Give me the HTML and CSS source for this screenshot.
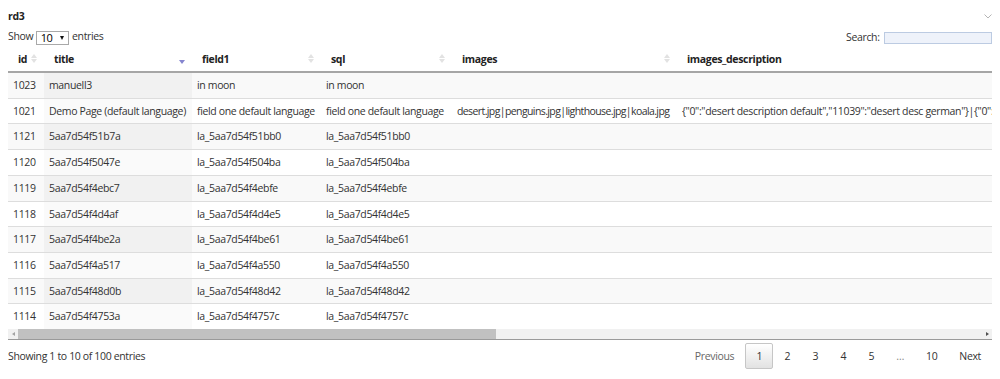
FILE: index.html
```html
<!DOCTYPE html>
<html lang="en">
<head>
    <meta charset="UTF-8" />
    <title>rd3</title>
    <link rel="stylesheet" href="styles.css">
</head>
<body>
<div class="panel">
    <!-- Panel header -->
    <div class="panel-head">
        <span class="panel-title">rd3</span>
        <svg class="chevron" viewBox="0 0 8 5" width="8" height="5"><path d="M0.5 0.5 L4 4 L7.5 0.5" fill="none" stroke="#b5b5b5" stroke-width="1"/></svg>
    </div>

    <!-- Length + search controls -->
    <div class="dt-top">
        <label class="dt-length">Show <span class="len-select">10 <i class="caret"></i></span> entries</label>
        <label class="dt-search">Search: <input type="search"></label>
    </div>

    <!-- Scrolling table -->
    <div class="dt-scroll">
        <table>
            <colgroup>
                <col class="c-id"><col class="c-title"><col class="c-field"><col class="c-sql"><col class="c-img"><col class="c-desc">
            </colgroup>
            <thead>
            <tr>
                <th><div class="th-in">id<i class="sort"></i></div></th>
                <th><div class="th-in">title<i class="sort desc"></i></div></th>
                <th><div class="th-in">field1<i class="sort"></i></div></th>
                <th><div class="th-in">sql<i class="sort"></i></div></th>
                <th><div class="th-in">images<i class="sort"></i></div></th>
                <th><div class="th-in">images_description</div></th>
            </tr>
            </thead>
            <tbody>
            <tr><td>1023</td><td class="sorted">manuell3</td><td>in moon</td><td>in moon</td><td></td><td></td></tr>
            <tr><td>1021</td><td class="sorted">Demo Page (default language)</td><td>field one default language</td><td>field one default language</td><td class="files">desert.jpg|penguins.jpg|lighthouse.jpg|koala.jpg</td><td>{"0":"desert description default","11039":"desert desc german"}|{"0":"penguins description default","11039":"penguins desc german"}</td></tr>
            <tr><td>1121</td><td class="sorted">5aa7d54f51b7a</td><td>la_5aa7d54f51bb0</td><td>la_5aa7d54f51bb0</td><td></td><td></td></tr>
            <tr><td>1120</td><td class="sorted">5aa7d54f5047e</td><td>la_5aa7d54f504ba</td><td>la_5aa7d54f504ba</td><td></td><td></td></tr>
            <tr><td>1119</td><td class="sorted">5aa7d54f4ebc7</td><td>la_5aa7d54f4ebfe</td><td>la_5aa7d54f4ebfe</td><td></td><td></td></tr>
            <tr><td>1118</td><td class="sorted">5aa7d54f4d4af</td><td>la_5aa7d54f4d4e5</td><td>la_5aa7d54f4d4e5</td><td></td><td></td></tr>
            <tr><td>1117</td><td class="sorted">5aa7d54f4be2a</td><td>la_5aa7d54f4be61</td><td>la_5aa7d54f4be61</td><td></td><td></td></tr>
            <tr><td>1116</td><td class="sorted">5aa7d54f4a517</td><td>la_5aa7d54f4a550</td><td>la_5aa7d54f4a550</td><td></td><td></td></tr>
            <tr><td>1115</td><td class="sorted">5aa7d54f48d0b</td><td>la_5aa7d54f48d42</td><td>la_5aa7d54f48d42</td><td></td><td></td></tr>
            <tr><td>1114</td><td class="sorted">5aa7d54f4753a</td><td>la_5aa7d54f4757c</td><td>la_5aa7d54f4757c</td><td></td><td></td></tr>
            </tbody>
        </table>
    </div>

    <!-- Horizontal scrollbar -->
    <div class="hscroll">
        <span class="arr left"></span>
        <div class="track"><div class="thumb"></div></div>
        <span class="arr right"></span>
    </div>

    <!-- Info + pagination -->
    <div class="dt-bottom">
        <div class="dt-info">Showing 1 to 10 of 100 entries</div>
        <div class="paginate">
            <a class="page disabled">Previous</a>
            <a class="page current">1</a>
            <a class="page">2</a>
            <a class="page">3</a>
            <a class="page">4</a>
            <a class="page">5</a>
            <span class="page ellipsis">…</span>
            <a class="page">10</a>
            <a class="page">Next</a>
        </div>
    </div>
</div>
</body>
</html>
```

FILE: styles.css
```css
body {
    margin: 8px;
    font-family: 'Open Sans', 'Liberation Sans', sans-serif;
    font-size: 10.5px;
    letter-spacing: -0.35px;
    color: #333;
    background: #fff;
}
/* Panel header */
.panel-head {
    display: flex;
    justify-content: space-between;
    align-items: center;
    height: 16px;
}
.panel-title {
    font-weight: bold;
    color: #222;
}
/* Top controls */
.dt-top {
    display: flex;
    justify-content: space-between;
    align-items: center;
    height: 18px;
    margin-top: 4px;
}
.len-select {
    display: inline-flex;
    align-items: center;
    justify-content: space-between;
    width: 33px;
    height: 14px;
    box-sizing: border-box;
    border: 1px solid #a9a9a9;
    padding: 0 4px;
    margin: 0 1px 0 0;
    vertical-align: middle;
    color: #000;
    font-size: 11px;
}
.len-select .caret {
    border-left: 2.5px solid transparent;
    border-right: 2.5px solid transparent;
    border-top: 4px solid #111;
}
.dt-search input {
    width: 108px;
    height: 12px;
    box-sizing: border-box;
    border: 1px solid #bccbe2;
    background: #eef2fa;
    margin: 0 0 0 2px;
    padding: 0;
    vertical-align: middle;
}
/* Table */
.dt-scroll {
    overflow: hidden;
}
table {
    border-collapse: collapse;
    table-layout: fixed;
    width: 1369px;
}
.c-id { width: 36px; }
.c-title { width: 148px; }
.c-field { width: 129px; }
.c-sql { width: 131px; }
.c-img { width: 225px; }
.c-desc { width: 700px; }
th {
    text-align: left;
    font-weight: bold;
    height: 25px;
    padding: 0 7px 0 10px;
    border-bottom: 2px solid #a6a6a6;
    white-space: nowrap;
    color: #222;
}
.th-in {
    display: flex;
    justify-content: space-between;
    align-items: center;
}
/* Sort arrows */
.sort {
    display: inline-flex;
    flex-direction: column;
    gap: 1px;
}
.sort::before,
.sort::after {
    content: '';
    border-left: 3px solid transparent;
    border-right: 3px solid transparent;
}
.sort::before {
    border-bottom: 4px solid #e2e2e2;
}
.sort::after {
    border-top: 4px solid #e2e2e2;
}
.sort.desc {
    margin-top: 6px;
}
.sort.desc::before {
    display: none;
}
.sort.desc::after {
    border-top-color: #8585cf;
}
td {
    padding: 4px 5px;
    line-height: 16.7px;
    border-top: 1px solid #ddd;
    white-space: nowrap;
    overflow: hidden;
}
td.files {
    letter-spacing: -0.6px;
}
tbody tr:first-child td {
    border-top: none;
}
tbody tr:nth-child(odd) {
    background: #f9f9f9;
}
tbody tr:nth-child(odd) td.sorted {
    background: #f1f1f1;
}
tbody tr:nth-child(even) td.sorted {
    background: #fafafa;
}
/* Fake horizontal scrollbar */
.hscroll {
    display: flex;
    height: 10px;
    background: #f1f1f1;
    border-bottom: 1px solid #9a9a9a;
}
.arr {
    width: 10px;
    display: flex;
    align-items: center;
    justify-content: center;
}
.arr::before {
    content: '';
    border-top: 2.5px solid transparent;
    border-bottom: 2.5px solid transparent;
}
.arr.left::before {
    border-right: 3px solid #a3a3a3;
}
.arr.right::before {
    border-left: 3px solid #505050;
}
.track {
    flex: 1;
}
.thumb {
    width: 478px;
    height: 100%;
    background: #c1c1c1;
}
/* Footer */
.dt-bottom {
    display: flex;
    justify-content: space-between;
    align-items: center;
    padding-top: 3px;
}
.paginate {
    display: flex;
}
.page {
    display: flex;
    align-items: center;
    justify-content: center;
    min-width: 28px;
    height: 26px;
    box-sizing: border-box;
    padding: 0 10px;
    border: 1px solid transparent;
    border-radius: 2px;
    color: #333;
    cursor: pointer;
}
.page.disabled {
    color: #666;
    cursor: default;
}
.page.current {
    border-color: #c6c6c6;
    background: linear-gradient(#fff, #e2e2e2);
}
.page.ellipsis {
    color: #888;
    cursor: default;
}
```
